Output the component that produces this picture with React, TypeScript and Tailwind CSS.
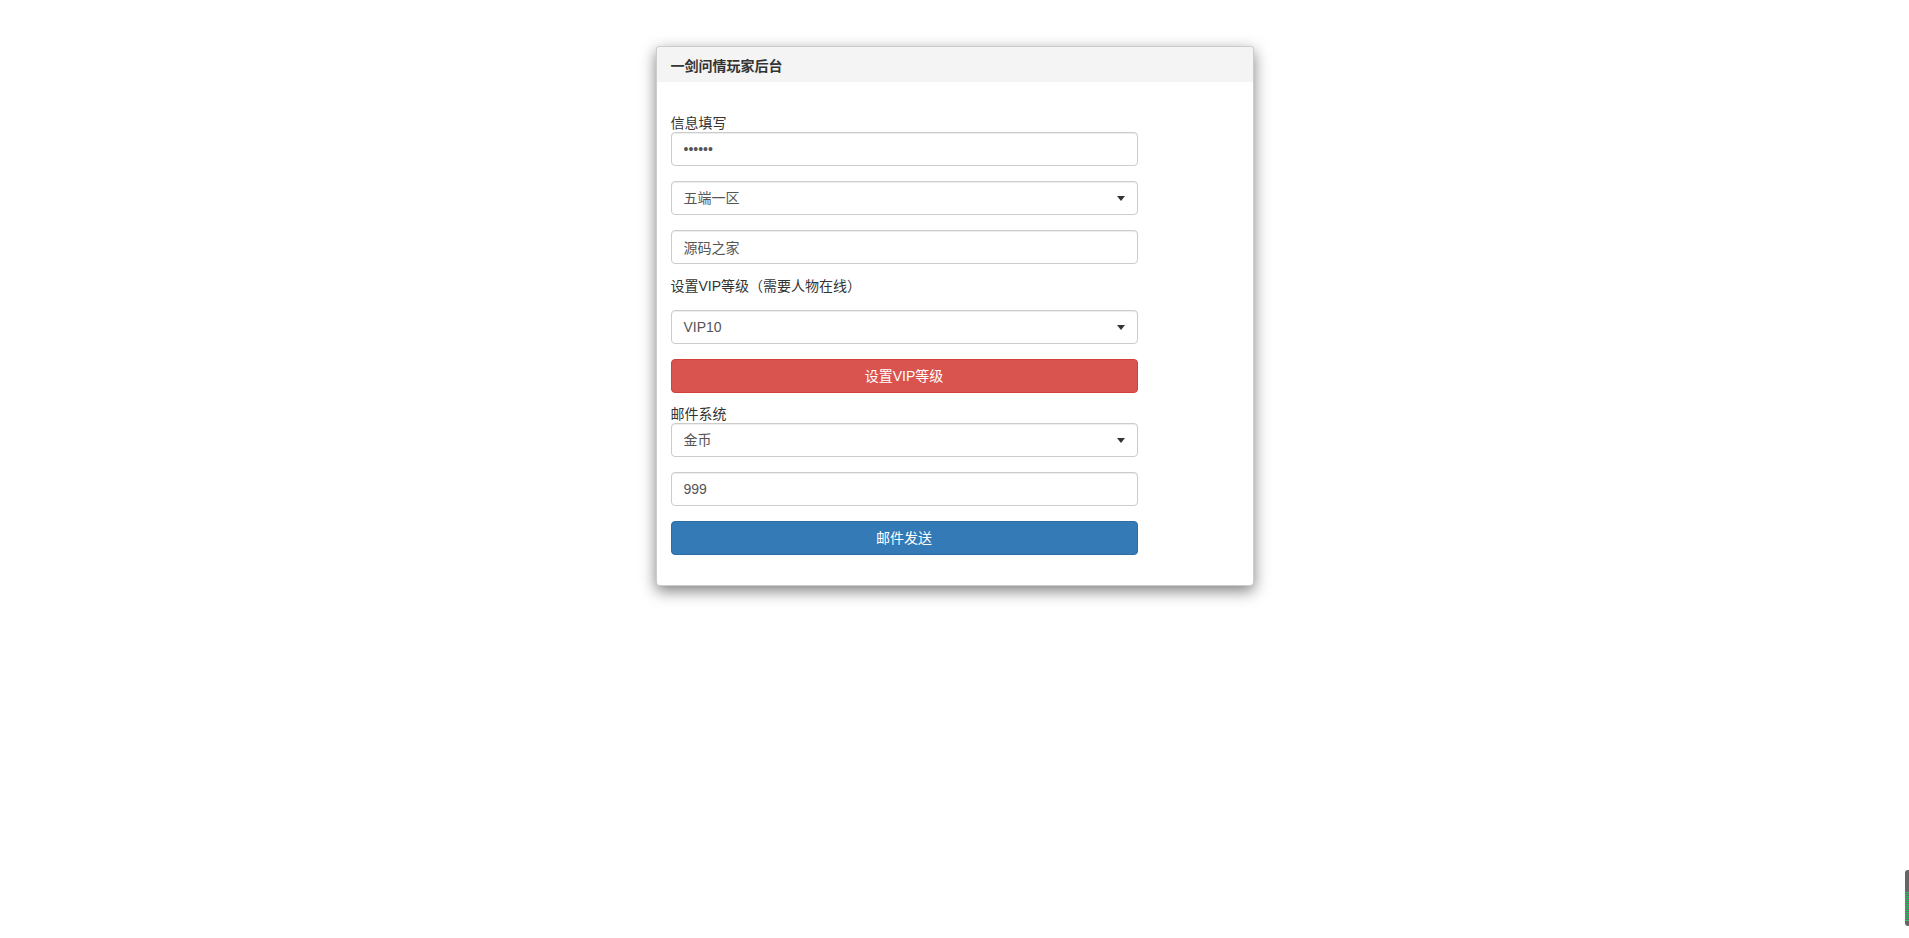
import React from 'react';

const font = { fontFamily: '"Liberation Sans", "Noto Sans CJK SC", sans-serif' };

const Caret = () => (
  <svg width="8" height="5" viewBox="0 0 8 5" className="shrink-0">
    <path d="M0 0h8L4 5z" fill="#333" />
  </svg>
);

const FakeSelect: React.FC<{ value: string }> = ({ value }) => (
  <div className="flex h-[34px] w-full items-center justify-between rounded-[4px] border border-[#ccc] bg-white pl-[12px] pr-[12px] text-[14px] text-[#555] shadow-[inset_0_1px_1px_rgba(0,0,0,0.075)]">
    <span>{value}</span>
    <Caret />
  </div>
);

const TextField: React.FC<{ value: string; type?: string }> = ({ value, type = 'text' }) => (
  <input
    type={type}
    readOnly
    defaultValue={value}
    className="block h-[34px] w-full rounded-[4px] border border-[#ccc] bg-white px-[12px] text-[14px] text-[#555] shadow-[inset_0_1px_1px_rgba(0,0,0,0.075)] outline-none"
    style={font}
  />
);

export default function App() {
  return (
    <div className="relative min-h-screen w-full bg-white text-[#333]" style={font}>
      <div className="pt-[46px]">
        <div className="mx-auto w-[598px] rounded-[4px] border border-[rgba(0,0,0,0.2)] bg-white shadow-[0_5px_15px_rgba(0,0,0,0.5)]">
          <div className="h-[35px] rounded-t-[4px] bg-[#f4f4f4] pl-[14px] pt-[10px] text-[14px] font-bold leading-[18px] text-[#333]">
            一剑问情玩家后台
          </div>

          <div className="px-[14px] pb-[30px] pt-[32px]">
            <div className="flex w-[467px] flex-col">
              <label className="block h-[18px] text-[14px] leading-[18px]">信息填写</label>
              <TextField type="password" value="123456" />

              <div className="mt-[15px]">
                <FakeSelect value="五端一区" />
              </div>

              <div className="mt-[15px]">
                <TextField value="源码之家" />
              </div>

              <label className="mt-[13px] block h-[18px] text-[14px] leading-[18px]">
                设置VIP等级（需要人物在线）
              </label>

              <div className="mt-[15px]">
                <FakeSelect value="VIP10" />
              </div>

              <button className="mt-[15px] h-[34px] w-full rounded-[4px] border border-[#d43f3a] bg-[#d9534f] text-[14px] text-white">
                设置VIP等级
              </button>

              <label className="mt-[12px] block h-[18px] text-[14px] leading-[18px]">邮件系统</label>
              <FakeSelect value="金币" />

              <div className="mt-[15px]">
                <TextField value="999" />
              </div>

              <button className="mt-[15px] h-[34px] w-full rounded-[4px] border border-[#2e6da4] bg-[#337ab7] text-[14px] text-white">
                邮件发送
              </button>
            </div>
          </div>
        </div>
      </div>

      <div className="absolute left-[1905px] top-[870px] h-[56px] w-[4px] rounded-l-[3px] bg-[#666]">
        <div className="mt-[22px] h-[30px] w-full bg-[repeating-linear-gradient(to_bottom,#22c55e_0,#22c55e_1px,#666_1px,#666_2px)]" />
      </div>
    </div>
  );
}
